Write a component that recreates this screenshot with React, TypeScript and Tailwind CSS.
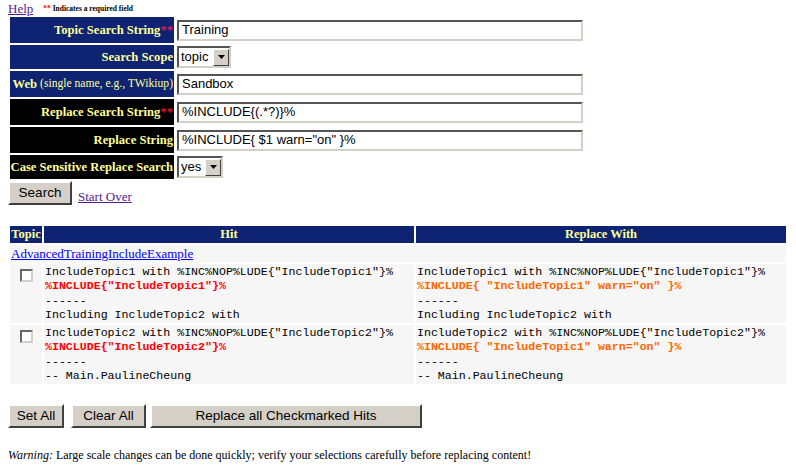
import React from 'react';

const navy = 'bg-[#0e2473]';

function Label({ children, dark }: { children: React.ReactNode; dark?: boolean }) {
  return (
    <div className={`flex items-center justify-end pr-[1px] font-bold text-[12.6px] text-[#ffff99] whitespace-nowrap overflow-hidden ${dark ? 'bg-black' : navy}`}>
      {children}
    </div>
  );
}

function Req() {
  return <span className="text-[#ff2244] font-normal">**</span>;
}

function TextBox({ value }: { value: string }) {
  return (
    <div className="w-[406px] h-[21px] flex items-center pl-[3px] bg-white border-2 border-[#d4d0c8] border-t-[#555] border-l-[#555] font-['Liberation_Sans',Arial,sans-serif] text-[13px] text-black whitespace-pre">
      {value}
    </div>
  );
}

function Select({ value, width }: { value: string; width: string }) {
  return (
    <div className={`${width} h-[22px] flex items-center justify-between bg-white border-2 border-[#d4d0c8] border-t-[#555] border-l-[#555] font-['Liberation_Sans',Arial,sans-serif] text-[13px] text-black`}>
      <span className="pl-[2px]">{value}</span>
      <span className="w-[16px] h-[17px] flex items-center justify-center bg-[#d4d0c8] border border-white border-r-[#404040] border-b-[#404040]">
        <svg width="7" height="4" viewBox="0 0 7 4"><path d="M0 0h7L3.5 4z" fill="#000" /></svg>
      </span>
    </div>
  );
}

function Btn({ children, className = '' }: { children: React.ReactNode; className?: string }) {
  return (
    <button className={`h-[24px] bg-[#d4d0c8] border-2 border-white border-r-[#404040] border-b-[#404040] font-['Liberation_Sans',Arial,sans-serif] text-[13.5px] text-black ${className}`}>
      {children}
    </button>
  );
}

function Check() {
  return (
    <span className="block w-[13px] h-[13px] bg-white border-2 border-[#d4d0c8] border-t-[#666] border-l-[#666]" />
  );
}

const hits = [
  {
    line1: 'IncludeTopic1 with %INC%NOP%LUDE{"IncludeTopic1"}%',
    hit: '%INCLUDE{"IncludeTopic1"}%',
    repl: '%INCLUDE{ "IncludeTopic1" warn="on" }%',
    last: 'Including IncludeTopic2 with',
  },
  {
    line1: 'IncludeTopic2 with %INC%NOP%LUDE{"IncludeTopic2"}%',
    hit: '%INCLUDE{"IncludeTopic2"}%',
    repl: '%INCLUDE{ "IncludeTopic1" warn="on" }%',
    last: '-- Main.PaulineCheung',
  },
];

function Code({ line1, mark, last, color }: { line1: string; mark: string; last: string; color: string }) {
  return (
    <div className="bg-[#f6f6f6] pl-[1px] pt-[1px] font-['Liberation_Mono','Courier_New',monospace] text-[11.6px] leading-[14.3px] text-black whitespace-pre">
      <div>{line1}</div>
      <div className={`font-bold ${color}`}>{mark}</div>
      <div>------</div>
      <div>{last}</div>
    </div>
  );
}

export default function App() {
  return (
    <div className="w-[796px] h-[474px] bg-white text-black font-['Liberation_Serif','Times_New_Roman',serif] text-[13px]">
      <div className="h-[17px] flex items-start pl-[8px] pt-[1px]">
        <a href="#" className="text-[#551a8b] underline leading-[15px]">Help</a>
        <span className="ml-[10px] mt-[4px] text-[7.5px] font-bold leading-[8px]">
          <span className="text-[#ff0000]">**</span> Indicates a required field
        </span>
      </div>

      <div className="grid grid-cols-[164px_410px] grid-rows-[26px_24px_26px_26px_26px_24px] gap-[2px] pl-[10px]">
        <Label>Topic Search String<Req /></Label>
        <div className="flex items-center pl-[1px]"><TextBox value="Training" /></div>

        <Label>Search Scope</Label>
        <div className="flex items-center pl-[1px]"><Select value="topic" width="w-[54px]" /></div>

        <Label>Web<span className="font-normal text-[11.6px] ml-[3px]">(single name, e.g., TWikiup)</span></Label>
        <div className="flex items-center pl-[1px]"><TextBox value="Sandbox" /></div>

        <Label dark>Replace Search String<Req /></Label>
        <div className="flex items-center pl-[1px]"><TextBox value="%INCLUDE{(.*?)}%" /></div>

        <Label dark>Replace String</Label>
        <div className="flex items-center pl-[1px]"><TextBox value={'%INCLUDE{ $1 warn="on" }%'} /></div>

        <Label dark>Case Sensitive Replace Search</Label>
        <div className="flex items-center pl-[1px]"><Select value="yes" width="w-[46px]" /></div>
      </div>

      <div className="flex items-end pl-[8px] mt-[2px] h-[24px]">
        <Btn className="w-[64px]">Search</Btn>
        <a href="#" className="ml-[6px] mb-[1px] text-[#551a8b] underline leading-[15px]">Start Over</a>
      </div>

      <div className="grid grid-cols-[32px_370px_370px] grid-rows-[17px_17px_59px_59px] gap-[2px] pl-[10px] mt-[21px]">
        <div className={`${navy} flex items-center justify-center font-bold text-[12.5px] text-[#ffff99]`}>Topic</div>
        <div className={`${navy} flex items-center justify-center font-bold text-[12.5px] text-[#ffff99]`}>Hit</div>
        <div className={`${navy} flex items-center justify-center font-bold text-[12.5px] text-[#ffff99]`}>Replace With</div>

        <div className="col-span-3 bg-[#f6f6f6] flex items-center pl-[1px]">
          <a href="#" className="text-[#0000ee] underline leading-[15px]">AdvancedTrainingIncludeExample</a>
        </div>

        {hits.map((h) => (
          <React.Fragment key={h.line1}>
            <div className="bg-[#f6f6f6] flex justify-center pt-[5px]"><Check /></div>
            <Code line1={h.line1} mark={h.hit} last={h.last} color="text-[#ff0000]" />
            <Code line1={h.line1} mark={h.repl} last={h.last} color="text-[#ff6600]" />
          </React.Fragment>
        ))}
      </div>

      <div className="flex pl-[8px] mt-[20px]">
        <Btn className="w-[56px]">Set All</Btn>
        <Btn className="w-[75px] ml-[7px]">Clear All</Btn>
        <Btn className="w-[272px] ml-[4px]">Replace all Checkmarked Hits</Btn>
      </div>

      <p className="pl-[8px] mt-[20px] text-[12px] leading-[15px]">
        <i>Warning:</i> Large scale changes can be done quickly; verify your selections carefully before replacing content!
      </p>
    </div>
  );
}
